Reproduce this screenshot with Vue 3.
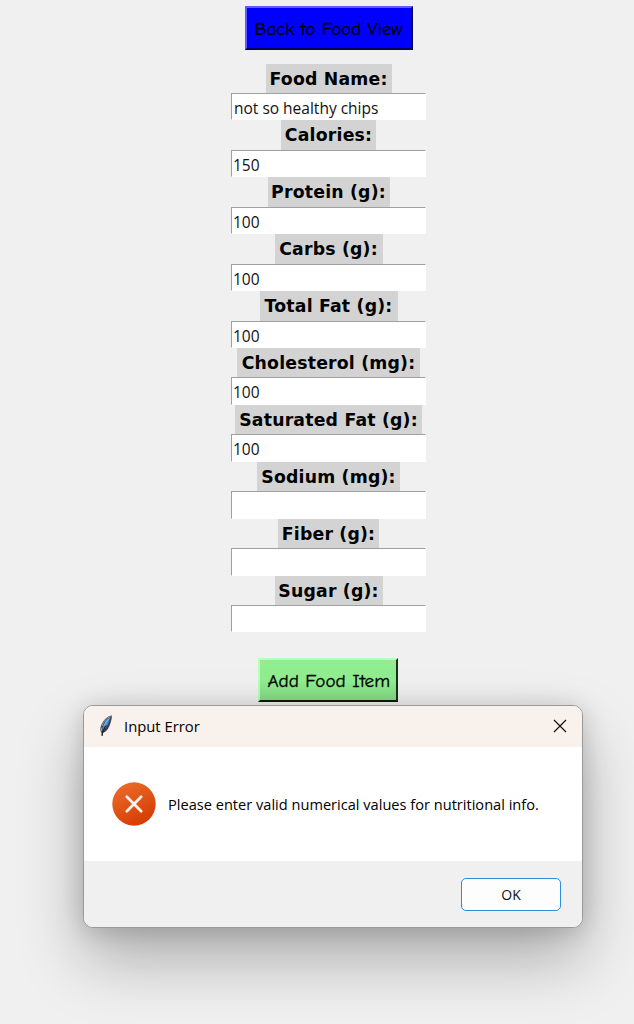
<script setup>
const fields = [
  { label: 'Food Name:', value: 'not so healthy chips', width: 126 },
  { label: 'Calories:', value: '150', width: 95 },
  { label: 'Protein (g):', value: '100', width: 122 },
  { label: 'Carbs (g):', value: '100', width: 108 },
  { label: 'Total Fat (g):', value: '100', width: 138 },
  { label: 'Cholesterol (mg):', value: '100', width: 183 },
  { label: 'Saturated Fat (g):', value: '100', width: 187 },
  { label: 'Sodium (mg):', value: '', width: 143 },
  { label: 'Fiber (g):', value: '', width: 101 },
  { label: 'Sugar (g):', value: '', width: 108 },
]
</script>

<template>
  <main class="window">
    <button class="tk-button back"><span>Back to Food View</span></button>
    <form class="form" @submit.prevent>
      <div v-for="f in fields" :key="f.label" class="field">
        <label :style="{ width: f.width + 'px' }">{{ f.label }}</label>
        <div class="entry" :class="{ numeric: f.value.length === 3 }">{{ f.value }}</div>
      </div>
    </form>
    <button class="tk-button add"><span>Add Food Item</span></button>

    <section class="dialog" role="alertdialog">
      <header>
        <svg class="feather" width="16" height="24" viewBox="0 0 16 24">
          <path d="M13.800 1.600C9.500 2 5 6.500 3.200 11.300c-1.100 2.900-1.200 5.400.1 7.200l.7 3.800 1.100-3.500c3.200-.8 5.500-4.200 6.900-8.200 1.100-3.200 2-6.200 1.800-9z" fill="#3a4046" />
          <path d="M12.700 3C8.600 4.800 5 9.500 4.200 16c3.400-1.300 5.700-4.400 6.700-8.300.5-1.700 1.500-3.200 1.800-4.700z" fill="#4489d6" />
          <path d="M12.600 2.300C8.800 3.700 5.200 7.600 3.900 12.200M3.400 13.500v3.500" fill="none" stroke="#9da2a5" stroke-width="1" />
          <path d="M8.300 11C6.300 13.500 4.900 17 4 22" fill="none" stroke="#18202b" stroke-width="1.100" />
          <path d="M10.900 5C9 6.300 7.400 9 6.300 12" fill="none" stroke="#6aaaf0" stroke-width="1.500" />
        </svg>
        <span class="title">Input Error</span>
        <svg class="close" width="14" height="14" viewBox="0 0 14 14">
          <path d="M1 1l12 12M13 1L1 13" fill="none" stroke="#111" stroke-width="1.200" />
        </svg>
      </header>
      <div class="body">
        <svg width="44" height="44" viewBox="0 0 44 44">
          <defs>
            <linearGradient id="err" x1=".2" y1="0" x2=".7" y2="1">
              <stop offset="0" stop-color="#ec6c2c" />
              <stop offset="1" stop-color="#d53a02" />
            </linearGradient>
          </defs>
          <circle cx="22" cy="22" r="21.700" fill="url(#err)" />
          <path d="M14.800 14.800l14.400 14.400M29.200 14.800L14.800 29.200" stroke="#fff5f0" stroke-width="2.700" stroke-linecap="round" />
        </svg>
        <p>Please enter valid numerical values for nutritional info.</p>
      </div>
      <footer><button class="ok">OK</button></footer>
    </section>
  </main>
</template>

<style>
body {
  background: #f0f0f0;
}
</style>

<style scoped>
.window {
  position: relative;
  box-sizing: border-box;
  width: 634px;
  height: 1024px;
  padding-top: 6px;
  overflow: hidden;
  background: #f0f0f0;
  display: flex;
  flex-direction: column;
  align-items: center;
  font-family: "Open Sans", "Noto Sans", sans-serif;
  color: #000;
}
.tk-button {
  box-sizing: border-box;
  padding: 1px 0 0;
  height: 44px;
  margin-left: 22px;
  border: 2px solid;
  display: flex;
  justify-content: center;
  align-items: center;
  font: 19px "Comic Sans MS", "Comic Neue", Lato, sans-serif;
  -webkit-text-stroke: 0.3px #000;
  white-space: nowrap;
  color: #000;
}
.tk-button span {
  flex: none;
  transform: scaleX(0.99);
}
.back {
  width: 168px;
  margin-left: 23px;
  background: #00f;
  border-color: #5c5cff #000050 #000050 #5c5cff;
}
.add {
  width: 140px;
  margin-top: 26px;
  background: linear-gradient(#90ee90 50%, #86dc86);
  border-color: #b8ffb8 #183018 #101810 #b8ffb8;
}
.add span {
  transform: translateX(1px) scaleX(1.01);
}
.form {
  width: 195px;
  margin-top: 13.500px;
  margin-left: 23px;
}
.field {
  height: 56.900px;
  display: flex;
  flex-direction: column;
  align-items: center;
}
label {
  height: 29.500px;
  flex: none;
  background: #d3d3d3;
  font: bold 17.300px/30px Verdana, "DejaVu Sans", sans-serif;
  letter-spacing: 0.2px;
  text-align: center;
  white-space: nowrap;
}
.entry {
  box-sizing: border-box;
  width: 195px;
  height: 27.400px;
  padding-left: 2px;
  border: 1px solid;
  border-color: #a0a0a0 #fff #fff #a0a0a0;
  background: #fff;
  font-size: 15.500px;
  line-height: 28px;
  color: #111;
}
.numeric {
  padding-left: 1px;
}
.dialog {
  position: absolute;
  left: 83px;
  top: 705px;
  box-sizing: border-box;
  width: 500px;
  height: 223px;
  border: 1px solid #999;
  border-radius: 10px;
  overflow: hidden;
  background: #fff;
  display: flex;
  flex-direction: column;
  box-shadow: 0 32px 64px rgba(0, 0, 0, 0.28), 0 2px 24px rgba(0, 0, 0, 0.17);
}
header {
  height: 41px;
  flex: none;
  display: flex;
  align-items: center;
  padding: 0 15px 0 14px;
  background: #f9f1eb;
}
.feather,
.close {
  margin-bottom: 2px;
}
.title {
  margin: 0 0 2px 10px;
  flex: 1;
  font-size: 14.800px;
}
.body {
  height: 114px;
  flex: none;
  display: flex;
  align-items: center;
  padding-left: 28px;
}
.body p {
  margin: 0 0 1px 12px;
  font-size: 14.600px;
  white-space: nowrap;
}
footer {
  flex: 1;
  display: flex;
  justify-content: flex-end;
  align-items: flex-start;
  padding: 17px 21px 0 0;
  background: #f0f0f0;
}
.ok {
  box-sizing: border-box;
  width: 100px;
  height: 33px;
  padding: 0;
  border: 1.500px solid #2f8ddc;
  border-radius: 5px;
  background: #fdfdfd;
  font: 14px "Open Sans", sans-serif;
  color: #111;
}
</style>
